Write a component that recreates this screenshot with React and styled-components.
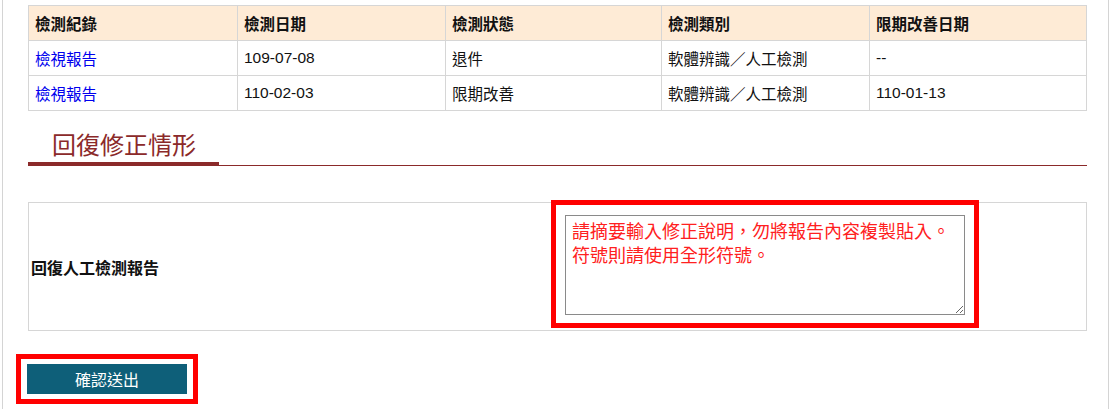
import styled, { createGlobalStyle } from "styled-components";

const GlobalStyle = createGlobalStyle`
  html, body {
    margin: 0;
    padding: 0;
    background: #fff;
  }
  body {
    font-family: "Liberation Sans", "Noto Sans CJK TC", sans-serif;
    color: #000;
  }
`;

const records = [
  { date: "109-07-08", status: "退件", type: "軟體辨識／人工檢測", deadline: "--" },
  { date: "110-02-03", status: "限期改善", type: "軟體辨識／人工檢測", deadline: "110-01-13" },
];

const App = () => {
  return (
    <>
      <GlobalStyle />
      <Frame>
        <RecordTable>
          <colgroup>
            <col style={{ width: 209 }} />
            <col style={{ width: 208 }} />
            <col style={{ width: 216 }} />
            <col style={{ width: 208 }} />
            <col style={{ width: 217 }} />
          </colgroup>
          <thead>
            <tr>
              <th>檢測紀錄</th>
              <th>檢測日期</th>
              <th>檢測狀態</th>
              <th>檢測類別</th>
              <th>限期改善日期</th>
            </tr>
          </thead>
          <tbody>
            {records.map(({ date, status, type, deadline }) => (
              <tr key={date}>
                <td>
                  <ReportLink href="#">檢視報告</ReportLink>
                </td>
                <td>{date}</td>
                <td>{status}</td>
                <td>{type}</td>
                <td>{deadline}</td>
              </tr>
            ))}
          </tbody>
        </RecordTable>

        <SectionHead>
          <h2>回復修正情形</h2>
        </SectionHead>

        <ReplyTable>
          <tbody>
            <tr>
              <LabelCell>回復人工檢測報告</LabelCell>
              <InputCell>
                <Highlight $offset={11}>
                  <ReplyText
                    defaultValue={"請摘要輸入修正說明，勿將報告內容複製貼入。\n符號則請使用全形符號。"}
                  />
                </Highlight>
              </InputCell>
            </tr>
          </tbody>
        </ReplyTable>

        <Actions>
          <Highlight $gap={5}>
            <SubmitButton type="button">確認送出</SubmitButton>
          </Highlight>
        </Actions>
      </Frame>
    </>
  );
};

export default App;

const Frame = styled.div`
  margin-left: 2px;
  width: 1107px;
  min-height: 100vh;
  box-sizing: border-box;
  border-left: 1px solid #d4d4d4;
  border-right: 1px solid #d4d4d4;
  padding: 5px 23px 0 25px;
`;

const RecordTable = styled.table`
  width: 1059px;
  table-layout: fixed;
  border-collapse: collapse;
  font-size: 15.5px;

  th,
  td {
    border: 1px solid #d6d6d6;
    height: 34px;
    padding: 0 6px;
    text-align: left;
    white-space: nowrap;
  }
  th {
    background: #feebd6;
    font-weight: bold;
    color: #111;
  }
  td {
    color: #111;
  }
`;

const ReportLink = styled.a`
  color: #0000ee;
  text-decoration: none;
`;

const SectionHead = styled.div`
  margin-top: 15px;
  width: 1059px;
  border-bottom: 1px solid #8b2a2a;

  h2 {
    display: inline-block;
    margin: 0 0 -1px;
    padding: 0 23px 0 24px;
    font-family: "Noto Sans CJK TC", sans-serif;
    font-size: 24px;
    font-weight: normal;
    line-height: 36px;
    color: #8b2a2a;
    border-bottom: 4px solid #8b2a2a;
  }
`;

const ReplyTable = styled.table`
  margin-top: 36px;
  width: 1059px;
  table-layout: fixed;
  border-collapse: collapse;

  td {
    border: 1px solid #d6d6d6;
    height: 127px;
  }
`;

const LabelCell = styled.td`
  width: 50%;
  padding: 0 2px;
  font-size: 16px;
  font-weight: bold;
  color: #111;
  border-right: none !important;
`;

const InputCell = styled.td`
  padding: 0;
  vertical-align: middle;
  border-left: none !important;
`;

const Highlight = styled.div`
  display: inline-block;
  vertical-align: top;
  border: 5px solid #ff0000;
  padding: ${({ $gap }) => ($gap ? `${$gap}px ${$gap + 1}px` : "10px 9px 8px")};
  margin-left: ${({ $offset }) => ($offset ? `-${$offset}px` : "0")};
  margin-top: ${({ $offset }) => ($offset ? "-5px" : "0")};
`;

const ReplyText = styled.textarea`
  display: block;
  width: 400px;
  height: 100px;
  box-sizing: border-box;
  margin: 0;
  padding: 2px 6px;
  border: 1px solid #8a8a8a;
  font-family: "Noto Sans CJK TC", sans-serif;
  font-size: 18px;
  line-height: 24px;
  color: #ff2020;
  resize: both;
  outline: none;
`;

const Actions = styled.div`
  margin-top: 23px;
  margin-left: -12px;
`;

const SubmitButton = styled.button`
  display: block;
  width: 160px;
  height: 30px;
  border: none;
  margin: 0;
  background: #0e5f79;
  color: #fff;
  font-family: "Noto Sans CJK TC", sans-serif;
  font-size: 16px;
  cursor: pointer;
`;
